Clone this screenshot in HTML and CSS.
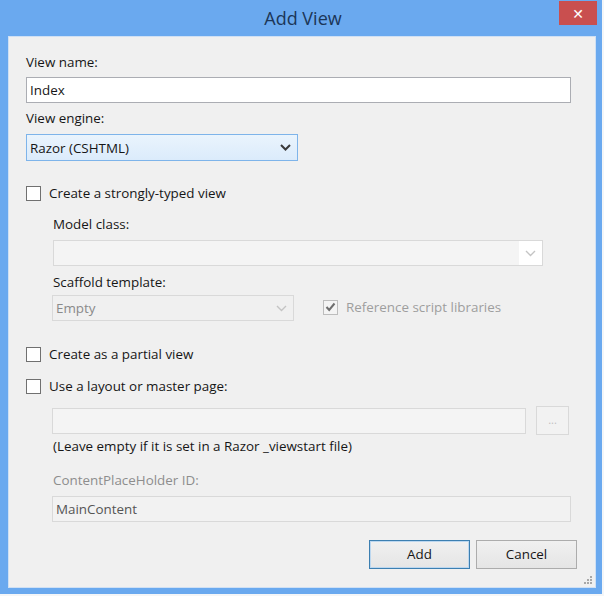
FILE: index.html
```html
<!DOCTYPE html>
<html>
<head>
<meta charset="utf-8">
<link rel="stylesheet" href="styles.css">
</head>
<body>
<div class="window">
  <div class="titlebar">
    <div class="title">Add View</div>
    <div class="close">&#x2715;</div>
  </div>
  <div class="client">
    <div class="label l-name">View name:</div>
    <div class="input i-name">Index</div>
    <div class="label l-engine">View engine:</div>
    <div class="select s-engine">
      <span class="sel-text">Razor (CSHTML)</span>
      <svg class="chev" width="11" height="7" viewBox="0 0 11 7"><path d="M1 1 L5.5 5.5 L10 1" fill="none" stroke="#3a3a3a" stroke-width="2"/></svg>
    </div>
    <div class="check-row r-strong"><span class="box"></span><span>Create a strongly-typed view</span></div>
    <div class="indent">
      <div class="label l-model">Model class:</div>
      <div class="select disabled s-model">
        <span class="sel-text"></span>
        <span class="arrow-area"><svg class="chev" width="11" height="7" viewBox="0 0 11 7"><path d="M1 1 L5.5 5.5 L10 1" fill="none" stroke="#c4c4c4" stroke-width="1.4"/></svg></span>
      </div>
      <div class="label l-scaffold">Scaffold template:</div>
      <div class="scaffold-row">
        <div class="select disabled s-scaffold">
          <span class="sel-text">Empty</span>
          <svg class="chev" width="11" height="7" viewBox="0 0 11 7"><path d="M1 1 L5.5 5.5 L10 1" fill="none" stroke="#c4c4c4" stroke-width="1.4"/></svg>
        </div>
        <div class="check-row dis r-ref"><span class="box checked"><svg width="11" height="10" viewBox="0 0 11 10"><path d="M1.5 5 L4.2 8 L9.5 1.5" fill="none" stroke="#6e6e6e" stroke-width="2"/></svg></span><span>Reference script libraries</span></div>
      </div>
    </div>
    <div class="check-row r-partial"><span class="box"></span><span>Create as a partial view</span></div>
    <div class="check-row r-layout"><span class="box"></span><span>Use a layout or master page:</span></div>
    <div class="indent">
      <div class="layout-row">
        <div class="input disabled i-layout"></div>
        <div class="browse">...</div>
      </div>
      <div class="label l-leave">(Leave empty if it is set in a Razor _viewstart file)</div>
      <div class="label dis-text l-cph">ContentPlaceHolder ID:</div>
      <div class="input disabled i-cph">MainContent</div>
    </div>
    <div class="buttons">
      <div class="btn default">Add</div>
      <div class="btn">Cancel</div>
    </div>
    <div class="grip">
      <span></span><span></span><span></span><span></span><span></span><span></span>
    </div>
  </div>
</div>
</body>
</html>
```
FILE: styles.css
```css
html, body {
  margin: 0;
  padding: 0;
  background: #f4f6f8;
}
body {
  font-family: "Open Sans", "Noto Sans", "DejaVu Sans", sans-serif;
  font-size: 13.4px;
  color: #161616;
}
.window {
  width: 602px;
  height: 594px;
  background: #6aa9ef;
  box-sizing: border-box;
  padding: 0 6px 6px 8px;
  display: flex;
  flex-direction: column;
  position: relative;
}
.titlebar {
  height: 36px;
  position: relative;
  display: flex;
  align-items: center;
  justify-content: center;
}
.title {
  font-size: 18px;
  color: #1c3657;
  margin-left: 2px;
}
.close {
  position: absolute;
  right: -1px;
  top: 1px;
  width: 38px;
  height: 24px;
  background: #c94f4f;
  color: #fff;
  font-size: 14px;
  font-weight: bold;
  display: flex;
  align-items: center;
  justify-content: center;
}
.client {
  flex: 1;
  background: #f0f0f0;
  border: 1px solid #cfe0f4;
  box-sizing: border-box;
  padding: 0 17px;
  position: relative;
}
.label {
  height: 18px;
  line-height: 18px;
  white-space: nowrap;
}
.l-name { margin-top: 16px; }
.input, .select {
  box-sizing: border-box;
  height: 26px;
  border: 1px solid #abadb3;
  background: #fff;
  line-height: 24px;
  padding-left: 3px;
}
.i-name { margin-top: 6px; width: 545px; }
.l-engine { margin-top: 6px; }
.select {
  display: flex;
  align-items: center;
  justify-content: space-between;
}
.sel-text { flex: 1; }
.chev { margin-right: 6px; flex: none; }
.s-engine {
  margin-top: 7px;
  width: 272px;
  height: 27px;
  background: linear-gradient(#eaf4fd, #dbebfb);
  border-color: #7eb4ea;
}
.check-row {
  display: flex;
  align-items: center;
  height: 18px;
  line-height: 18px;
  white-space: nowrap;
}
.box {
  width: 15px;
  height: 15px;
  box-sizing: border-box;
  border: 1px solid #707070;
  background: #fff;
  margin-right: 8px;
  flex: none;
  display: flex;
  align-items: center;
  justify-content: center;
}
.r-strong { margin-top: 23px; }
.indent { padding-left: 26px; }
.l-model { margin-top: 13px; padding-left: 1px; }
.disabled {
  background: #f4f4f4;
  border-color: #d9d9d9;
  color: #8a8a8a;
}
.s-model {
  margin-top: 7px;
  width: 490px;
  margin-left: 1px;
  padding-left: 0;
}
.arrow-area {
  width: 23px;
  height: 24px;
  background: #fff;
  display: flex;
  align-items: center;
  justify-content: center;
}
.arrow-area .chev { margin: 0; }
.l-scaffold { margin-top: 7px; padding-left: 1px; }
.scaffold-row {
  margin-top: 4px;
  display: flex;
  align-items: center;
}
.s-scaffold {
  width: 242px;
  background: #f0f0f0;
  padding-left: 3px;
}
.r-ref { margin-left: 29px; margin-top: -2px; }
.dis { color: #9e9e9e; }
.dis .box { border-color: #bdbdbd; background: #f4f4f4; }
.r-partial { margin-top: 24px; }
.r-layout { margin-top: 14px; }
.layout-row {
  margin-top: 11px;
  display: flex;
  align-items: center;
}
.i-layout {
  width: 474px;
}
.browse {
  margin-left: 10px;
  width: 33px;
  height: 29px;
  box-sizing: border-box;
  border: 1px solid #d9d9d9;
  background: #f2f2f2;
  color: #c0c0c0;
  font-size: 11px;
  text-align: center;
  line-height: 26px;
}
.l-leave { margin-top: 2px; padding-left: 1px; }
.dis-text { color: #8d8d8d; }
.l-cph { margin-top: 16px; padding-left: 1px; }
.i-cph {
  margin-top: 7px;
  width: 519px;
  color: #555;
  background: #f2f2f2;
}
.buttons {
  margin-top: 18px;
  display: flex;
  justify-content: flex-end;
  gap: 6px;
  padding-right: 1px;
}
.btn {
  width: 101px;
  height: 29px;
  box-sizing: border-box;
  border: 1px solid #acacac;
  background: linear-gradient(#f0f0f0, #e5e5e5);
  text-align: center;
  line-height: 27px;
}
.btn.default {
  border-color: #3c7fb1;
  box-shadow: inset 0 0 0 1px #bcd7ef;
}
.grip {
  position: absolute;
  right: 3px;
  bottom: 3px;
  width: 9px;
  height: 9px;
}
.grip span {
  position: absolute;
  width: 2px;
  height: 2px;
  background: #a8a8a8;
}
.grip span:nth-child(1) { right: 0; bottom: 0; }
.grip span:nth-child(2) { right: 3px; bottom: 0; }
.grip span:nth-child(3) { right: 6px; bottom: 0; }
.grip span:nth-child(4) { right: 0; bottom: 3px; }
.grip span:nth-child(5) { right: 3px; bottom: 3px; }
.grip span:nth-child(6) { right: 0; bottom: 6px; }
```
